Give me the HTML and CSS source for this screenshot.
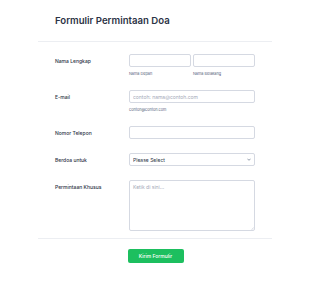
FILE: index.html
```html
<!DOCTYPE html>
<html lang="id">
<head>
    <meta charset="UTF-8">
    <meta name="viewport" content="width=device-width, initial-scale=1.0">
    <title>Formulir Permintaan Doa</title>
    <link rel="stylesheet" href="styles.css">
</head>
<body>
    <main class="form">
        <header class="form-header">
            <h1>Formulir Permintaan Doa</h1>
        </header>
        <div class="form-body">
            <div class="form-line">
                <label class="form-label">Nama Lengkap</label>
                <div class="form-input name-row">
                    <div class="name-part">
                        <input type="text" id="first">
                        <span class="sublabel">Nama Depan</span>
                    </div>
                    <div class="name-part">
                        <input type="text" id="last">
                        <span class="sublabel">Nama Belakang</span>
                    </div>
                </div>
            </div>
            <div class="form-line">
                <label class="form-label" for="email">E-mail</label>
                <div class="form-input">
                    <input type="email" id="email" placeholder="contoh: nama@contoh.com">
                    <span class="sublabel">contoh@contoh.com</span>
                </div>
            </div>
            <div class="form-line">
                <label class="form-label" for="phone">Nomor Telepon</label>
                <div class="form-input">
                    <input type="tel" id="phone">
                </div>
            </div>
            <div class="form-line">
                <label class="form-label" for="pray">Berdoa untuk</label>
                <div class="form-input overlay-wrap">
                    <select id="pray">
                        <option>Please Select</option>
                    </select>
                    <svg class="chevron" viewBox="0 0 10 6" width="4" height="3">
                        <path d="M1 1l4 4 4-4" fill="none" stroke="#57647e" stroke-width="1.6"/>
                    </svg>
                </div>
            </div>
            <div class="form-line">
                <label class="form-label" for="request">Permintaan Khusus</label>
                <div class="form-input overlay-wrap">
                    <textarea id="request" placeholder="Ketik di sini..."></textarea>
                    <svg class="grip" viewBox="0 0 4 4" width="3" height="3">
                        <path d="M0.5 3.5l3-3M2 3.5l1.5-1.5" fill="none" stroke="#b5bac6" stroke-width="0.5"/>
                    </svg>
                </div>
            </div>
        </div>
        <footer class="form-footer">
            <button type="submit">Kirim Formulir</button>
        </footer>
    </main>
</body>
</html>
```

FILE: styles.css
```css
body {
    margin: 0;
    background-color: #fff;
    font-family: Inter, "Noto Sans", sans-serif;
    color: #2c3345;
}

.form {
    width: 234px;
    margin: 0 auto;
}

.form-header {
    padding: 15px 17px 14px;
    border-bottom: 1px solid #eceef2;
}

.form-header h1 {
    margin: 0;
    font-size: 9.6px;
    line-height: 12px;
    font-weight: 600;
}

.form-body {
    padding: 12px 17px 7px;
    border-bottom: 1px solid #eceef2;
}

.form-line {
    display: flex;
    margin-bottom: 14px;
}

.form-line:last-child {
    margin-bottom: 0;
}

.form-label {
    width: 74px;
    flex-shrink: 0;
    padding-top: 4px;
    font-size: 5px;
    line-height: 6px;
    font-weight: 500;
}

.form-input {
    flex: 1;
    display: flex;
    flex-direction: column;
}

.name-row {
    flex-direction: row;
    gap: 2px;
}

.name-part {
    flex: 1;
    display: flex;
    flex-direction: column;
}

input,
select,
textarea {
    box-sizing: border-box;
    width: 100%;
    margin: 0;
    border: 1px solid #d5d9e2;
    border-radius: 2px;
    background: #fff;
    font-family: inherit;
    font-size: 5px;
    color: #2c3345;
    outline: none;
}

input {
    height: 13px;
    padding: 0 3px;
}

input::placeholder,
textarea::placeholder {
    color: #a3a9b8;
}

.sublabel {
    margin-top: 4px;
    font-size: 3.8px;
    line-height: 5px;
    color: #57647e;
}

.overlay-wrap {
    position: relative;
}

select {
    appearance: none;
    height: 13px;
    padding: 0 3px;
}

.chevron {
    position: absolute;
    right: 4px;
    top: 5px;
}

textarea {
    height: 51px;
    padding: 3px;
    resize: none;
}

.grip {
    position: absolute;
    right: 1px;
    bottom: 1px;
}

.form-footer {
    display: flex;
    justify-content: center;
    padding: 10px 0 0 1px;
}

button {
    width: 56px;
    height: 14px;
    padding: 0;
    border: none;
    border-radius: 2px;
    background-color: #1dbf5f;
    color: #fff;
    font-family: inherit;
    font-size: 5px;
    font-weight: 500;
    cursor: pointer;
}
```
